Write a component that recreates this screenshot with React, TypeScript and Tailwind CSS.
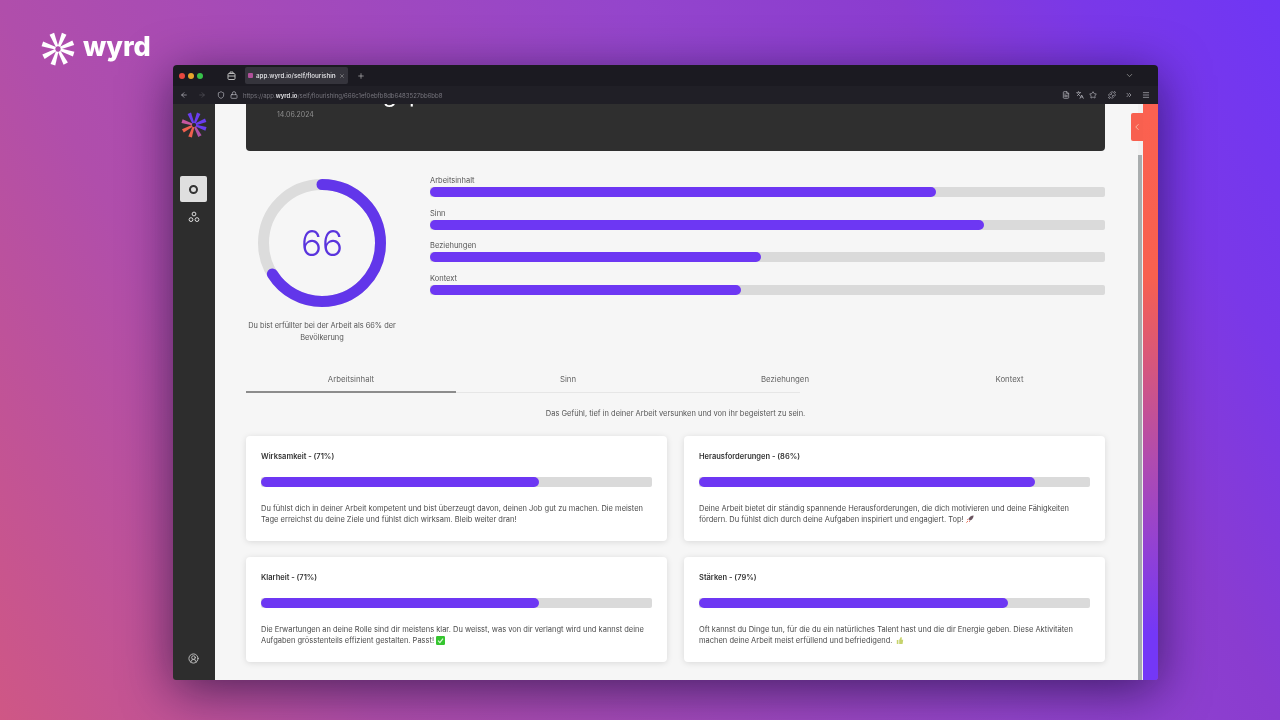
import React from "react";
import { ArrowLeft, ArrowRight, Shield, Lock, Plus, X, ChevronDown, ChevronLeft, FileText, Languages, Star, Puzzle, ChevronsRight, Menu, CircleUserRound } from "lucide-react";

const FONT = "font-['Inter','Liberation_Sans',sans-serif]";

function Burst({ size, colors }: { size: number; colors: string[] }) {
  const angles = [-112, -68, -22, 18, 62, 108, 152, 198];
  return (
    <svg width={size} height={size} viewBox="-16 -16 32 32" className="shrink-0">
      {angles.map((a, i) => {
        const r = (a * Math.PI) / 180;
        const px = -Math.sin(r);
        const py = Math.cos(r);
        const cx = Math.cos(r);
        const cy = Math.sin(r);
        const inner = 2.5;
        const outer = 15.5;
        const w1 = 1.2;
        const w2 = 2.3;
        const pts = [
          [cx * inner + px * w1, cy * inner + py * w1],
          [cx * outer + px * w2, cy * outer + py * w2],
          [cx * outer - px * w2, cy * outer - py * w2],
          [cx * inner - px * w1, cy * inner - py * w1],
        ]
          .map((p) => p.join(","))
          .join(" ");
        return <polygon key={a} points={pts} fill={colors[i % colors.length]} />;
      })}
    </svg>
  );
}

function Bar({ value }: { value: number }) {
  return (
    <div className="h-[10px] bg-[#dadada] rounded-[2px] overflow-hidden">
      <div className="h-full bg-[#6d37f3] rounded-full" style={{ width: `${value}%` }} />
    </div>
  );
}

function Rocket() {
  return (
    <svg width="8" height="8" viewBox="0 0 10 10" className="inline-block align-[-1px] ml-[2px]">
      <path d="M9.5.5C6.5.6 4 2.5 3 5l2 2c2.5-1 4.4-3.5 4.5-6.5z" fill="#6a5560" />
      <path d="M3 5 1 5.5l1.5 1M5 7l-.5 2-1-1.5" fill="#d8443c" />
      <path d="M2.3 7.7.6 9.4" stroke="#e8552f" strokeWidth="1.2" />
    </svg>
  );
}
function Check() {
  return (
    <svg width="9" height="9" viewBox="0 0 10 10" className="inline-block align-[-1.5px] ml-[2px]">
      <rect width="10" height="10" rx="1.5" fill="#35c52f" />
      <path d="M2.3 5.2 4.3 7.3 7.8 2.8" stroke="#d9f7d6" strokeWidth="1.4" fill="none" />
    </svg>
  );
}
function Thumb() {
  return (
    <svg width="8" height="9" viewBox="0 0 10 11" className="inline-block align-[-1.5px] ml-[3px]">
      <path d="M1 5h2v5H1zM4 5l2-4c1 0 1.500.8 1.200 2L7 4.500h2l-.8 5.500H4z" fill="#c6d36d" />
    </svg>
  );
}

const tracks = [
  { label: "Arbeitsinhalt", value: 75 },
  { label: "Sinn", value: 82 },
  { label: "Beziehungen", value: 49 },
  { label: "Kontext", value: 46 },
];

const cards: { title: string; value: number; text: string; icon?: React.ReactNode }[] = [
  {
    title: "Wirksamkeit - (71%)",
    value: 71,
    text: "Du fühlst dich in deiner Arbeit kompetent und bist überzeugt davon, deinen Job gut zu machen. Die meisten Tage erreichst du deine Ziele und fühlst dich wirksam. Bleib weiter dran!",
  },
  {
    title: "Herausforderungen - (86%)",
    value: 86,
    text: "Deine Arbeit bietet dir ständig spannende Herausforderungen, die dich motivieren und deine Fähigkeiten fördern. Du fühlst dich durch deine Aufgaben inspiriert und engagiert. Top!",
    icon: <Rocket />,
  },
  {
    title: "Klarheit - (71%)",
    value: 71,
    text: "Die Erwartungen an deine Rolle sind dir meistens klar. Du weisst, was von dir verlangt wird und kannst deine Aufgaben grösstenteils effizient gestalten. Passt!",
    icon: <Check />,
  },
  {
    title: "Stärken - (79%)",
    value: 79,
    text: "Oft kannst du Dinge tun, für die du ein natürliches Talent hast und die dir Energie geben. Diese Aktivitäten machen deine Arbeit meist erfüllend und befriedigend.",
    icon: <Thumb />,
  },
];

function Ring() {
  const r = 58.5;
  const c = 2 * Math.PI * r;
  return (
    <div className="relative w-[130px] h-[130px]">
      <svg width="130" height="130" viewBox="0 0 130 130" className="-rotate-90">
        <circle cx="65" cy="65" r={r} fill="none" stroke="#dcdcdc" strokeWidth="11" />
        <circle
          cx="65"
          cy="65"
          r={r}
          fill="none"
          stroke="#6236ea"
          strokeWidth="11"
          strokeLinecap="round"
          strokeDasharray={`${c * 0.66} ${c}`}
        />
      </svg>
      <div className="absolute inset-0 flex items-center justify-center text-[35px] font-light text-[#5a34dd]">66</div>
    </div>
  );
}

export default function App() {
  return (
    <div className={`${FONT} w-[1280px] h-[720px] overflow-hidden blur-[0.4px] bg-[linear-gradient(62deg,#cf5785_0%,#b04eab_23%,#9445cc_61%,#8a3cd0_77%,#7a38e8_88%,#6f36f5_100%)] pt-[33px]`}>
      <div className="flex items-center h-[31px] pl-[41px] gap-[8px]">
        <Burst size={34} colors={["#ffffff"]} />
        <span className="text-[27px] font-extrabold text-white leading-none -mt-[5px]">wyrd</span>
      </div>

      <div className="ml-[173px] mt-[1px] w-[985px] h-[615px] rounded-t-[4px] rounded-b-[3px] overflow-hidden shadow-[0_10px_50px_rgba(10,5,40,0.6)] flex flex-col">
        {/* title bar */}
        <div className="h-[21px] bg-[#1b1a21] flex items-center relative">
          <div className="flex gap-[3px] pl-[6px]">
            <span className="w-[6px] h-[6px] rounded-full bg-[#e8483f]" />
            <span className="w-[6px] h-[6px] rounded-full bg-[#e8a52c]" />
            <span className="w-[6px] h-[6px] rounded-full bg-[#37c24a]" />
          </div>
          <svg width="9" height="9" viewBox="0 0 9 9" fill="none" stroke="#bbb" strokeWidth="1" className="ml-[24px]">
            <rect x="1" y="2.500" width="7" height="6" rx="1" />
            <path d="M3 2.500V1h3v1.500M1 5h7" />
          </svg>
          <div className="ml-[9px] w-[103px] h-[17px] rounded-[2px] bg-[#35343c] flex items-center px-[3px] gap-[3px]">
            <span className="w-[5px] h-[5px] bg-[#b0509a] rounded-[1px] shrink-0" />
            <span className="text-[6.200px] font-semibold text-[#d8d8dc] whitespace-nowrap overflow-hidden flex-1">app.wyrd.io/self/flourishing/66</span>
            <X size={6} className="text-[#aaa] shrink-0" />
          </div>
          <Plus size={8} className="text-[#bbb] ml-[9px]" />
          <ChevronDown size={9} className="text-[#999] ml-auto mr-[24px]" />
        </div>
        {/* toolbar */}
        <div className="h-[18px] bg-[#201f26] flex items-center text-[#bdbdc4]">
          <ArrowLeft size={8} className="ml-[7px]" />
          <ArrowRight size={8} className="ml-[10px] text-[#55545c]" />
          <Shield size={8} className="ml-[11px]" />
          <Lock size={8} className="ml-[5px]" />
          <span className="ml-[5px] text-[6px] text-[#77767e] whitespace-nowrap">
            https://app.<span className="text-[#e2e2e6] font-semibold">wyrd.io</span>/self/flourishing/666c1ef0ebfb8db6483527bb6bb8
          </span>
          <div className="ml-auto flex items-center mr-[8px]">
            <FileText size={8} />
            <Languages size={8} className="ml-[6px]" />
            <Star size={8} className="ml-[5px]" />
            <Puzzle size={8} className="ml-[11px]" />
            <ChevronsRight size={8} className="ml-[9px]" />
            <Menu size={8} className="ml-[9px]" />
          </div>
        </div>

        {/* body */}
        <div className="flex-1 flex min-h-0 relative">
          <aside className="w-[42px] pr-[1px] bg-[#2d2d2d] flex flex-col items-center shrink-0">
            <div className="mt-[8px]">
              <Burst size={26} colors={["#6a3df0", "#6a3df0", "#6a3df0", "#6a3df0", "#b052a8", "#f0604f", "#f0604f", "#c857a0"]} />
            </div>
            <div className="mt-[38px] w-[27px] h-[26px] rounded-[2px] bg-[#dfdfdf] flex items-center justify-center">
              <span className="w-[9px] h-[9px] rounded-full border-[2px] border-[#333]" />
            </div>
            <svg width="12" height="12" viewBox="0 0 12 12" className="mt-[9px] text-[#ddd]" fill="none" stroke="currentColor" strokeWidth="1">
              <circle cx="6" cy="3" r="1.9" />
              <circle cx="3" cy="8.600" r="1.9" />
              <circle cx="9" cy="8.600" r="1.9" />
            </svg>
            <CircleUserRound size={11} className="mt-auto mb-[16px] text-[#c4c4c4]" />
          </aside>

          <main className="flex-1 min-w-0 bg-[#f6f6f6] pl-[31px] pr-[33px] overflow-hidden text-[#3a3a3a]">
            <div className="h-[47px] bg-[#2f2f2f] rounded-b-[4px] overflow-hidden pl-[31px]">
              <div className="-mt-[25px] h-[31px] text-[23px] leading-[31px] text-white whitespace-nowrap">Dein Erfolgsprofil</div>
              <div className="mt-[1px] text-[7px] leading-[8px] text-[#8f8f8f]">14.06.2024</div>
            </div>

            <div className="flex pt-[24px] gap-[32px]">
              <div className="w-[152px] shrink-0 pt-[3px] flex flex-col items-center">
                <Ring />
                <p className="mt-[12px] text-[7.400px] leading-[12px] text-center text-[#555]">
                  Du bist erfüllter bei der Arbeit als 66% der Bevölkerung
                </p>
              </div>
              <div className="flex-1 flex flex-col gap-[10.500px]">
                {tracks.map((t) => (
                  <div key={t.label}>
                    <div className="h-[11px] mb-[1px] text-[7.500px] leading-[11px] text-[#555]">{t.label}</div>
                    <Bar value={t.value} />
                  </div>
                ))}
              </div>
            </div>

            <div className="mt-[28px]">
              <div className="flex h-[14px] text-[7.800px] leading-[14px] text-[#666] text-center">
                <span className="w-[210px]">Arbeitsinhalt</span>
                <span className="w-[224px]">Sinn</span>
                <span className="w-[210px]">Beziehungen</span>
                <span className="flex-1 pl-[24px]">Kontext</span>
              </div>
              <div className="flex mt-[5px] h-[2px] items-end">
                <div className="w-[210px] h-[2px] bg-[#8c8c8c]" />
                <div className="w-[344px] h-px bg-[#e6e6e6]" />
              </div>
            </div>

            <p className="mt-[15px] h-[12px] text-[7.500px] leading-[12px] text-center text-[#555]">
              Das Gefühl, tief in deiner Arbeit versunken und von ihr begeistert zu sein.
            </p>

            <div className="mt-[16px] grid grid-cols-2 gap-x-[17px] gap-y-[16px]">
              {cards.map((c) => (
                <div key={c.title} className="bg-white rounded-[4px] shadow-[0_1px_6px_rgba(0,0,0,0.12)] px-[15px] pt-[15px] pb-[15.500px]">
                  <div className="h-[11px] text-[7.500px] leading-[11px] font-semibold text-[#333]">{c.title}</div>
                  <div className="mt-[15px]">
                    <Bar value={c.value} />
                  </div>
                  <p className="mt-[15.500px] text-[7.500px] leading-[11.500px] text-[#4a4a4a]">
                    {c.text}
                    {c.icon}
                  </p>
                </div>
              ))}
            </div>
          </main>

          <div className="w-[5px] shrink-0 bg-[#f1f1f1] flex flex-col">
            <div className="h-[51px]" />
            <div className="flex-1 w-[4px] bg-[#a9adae]" />
          </div>
          <div className="w-[15px] shrink-0 bg-[linear-gradient(180deg,#fb6150_0%,#f8604f_30%,#b04bb0_62%,#7437f7_92%)]" />
          <div className="absolute left-[958px] top-[9px] w-[12px] h-[28px] bg-[#f8604f] rounded-l-[2px] flex items-center justify-center">
            <ChevronLeft size={10} className="text-[#f8c7b0]" />
          </div>
        </div>
      </div>
    </div>
  );
}
